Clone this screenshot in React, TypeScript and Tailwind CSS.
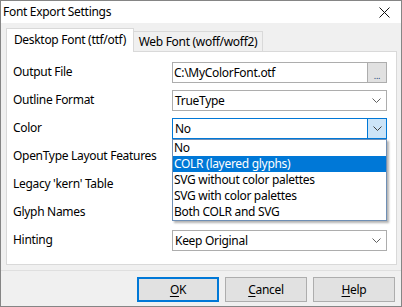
import React from "react";

const Chevron = ({ color = "#606060" }: { color?: string }) => (
  <svg width="9" height="5" viewBox="0 0 9 5" className="block">
    <path d="M0.5 0.5 L4.5 4.5 L8.5 0.5" fill="none" stroke={color} strokeWidth="1" />
  </svg>
);

const Select = ({ value, focused = false }: { value: string; focused?: boolean }) => (
  <div
    className={
      focused
        ? "flex h-[21px] w-[215px] items-stretch border border-[#0078d7] bg-white"
        : "flex h-[21px] w-[215px] items-stretch border border-[#adadad] bg-white"
    }
  >
    <div className="flex flex-1 items-center pl-[2px] leading-none">{value}</div>
    {focused ? (
      <div className="flex w-[19px] items-center justify-center border-l border-[#0078d7] bg-[#cce4f7]">
        <Chevron color="#404040" />
      </div>
    ) : (
      <div className="flex w-[19px] items-center justify-center">
        <Chevron />
      </div>
    )}
  </div>
);

const Row = ({ label, children }: { label: string; children?: React.ReactNode }) => (
  <div className="flex h-[21px] items-center">
    <div className="w-[159px] pb-[2px] leading-none">{label}</div>
    <div className="relative">{children}</div>
  </div>
);

const Btn = ({ u, rest, def = false }: { u: string; rest: string; def?: boolean }) => (
  <div
    className={
      def
        ? "flex h-[25px] w-[82px] items-center justify-center border-2 border-[#0078d7] bg-[#e1e1e1]"
        : "flex h-[25px] w-[82px] items-center justify-center border border-[#adadad] bg-[#e1e1e1]"
    }
  >
    <span>
      <span className="underline underline-offset-2">{u}</span>
      {rest}
    </span>
  </div>
);

export default function App() {
  const items = ["No", "COLR (layered glyphs)", "SVG without color palettes", "SVG with color palettes", "Both COLR and SVG"];
  return (
    <div
      className="flex h-[307px] w-[402px] flex-col border border-[#858585] bg-[#f0f0f0] text-[12px] tracking-[-0.3px] text-black"
      style={{ fontFamily: '"Noto Sans", "Segoe UI", sans-serif' }}
    >
      <div className="flex h-[22px] items-center justify-between bg-white pl-[2px] pr-[11px]">
        <span className="leading-none">Font Export Settings</span>
        <svg width="11" height="11" viewBox="0 0 11 11">
          <path d="M0.5 0.5 L10.5 10.5 M10.5 0.5 L0.5 10.5" stroke="#111" strokeWidth="1" />
        </svg>
      </div>
      <div className="flex flex-1 flex-col pt-[5px]">
        <div className="flex h-[24px] items-end pl-[5px]">
          <div className="relative z-10 flex h-[24px] w-[128px] items-center justify-center border-l border-r border-t border-[#d9d9d9] bg-white pb-[1px] leading-none">
            Desktop Font (ttf/otf)
          </div>
          <div className="mb-px flex h-[20px] w-[129px] items-center justify-center border-r border-t border-[#d9d9d9] bg-[#f0f0f0] pt-[1px] leading-none">
            Web Font (woff/woff2)
          </div>
        </div>
        <div className="-mt-px ml-[5px] flex h-[214px] w-[391px] flex-col gap-[7px] border border-[#d9d9d9] bg-white pl-[6px] pt-[10px]">
          <Row label="Output File">
            <div className="flex h-[21px] w-[215px] items-stretch border border-[#adadad] bg-white">
              <div className="flex flex-1 items-center pl-[1px] leading-none">C:\MyColorFont.otf</div>
              <div className="flex w-[19px] items-center justify-center border-l border-[#adadad] bg-[#e1e1e1] pt-[5px] text-[9px] leading-none text-[#1d3f7a]">
                ...
              </div>
            </div>
          </Row>
          <Row label="Outline Format">
            <Select value="TrueType" />
          </Row>
          <Row label="Color">
            <Select value="No" focused />
            <div className="absolute left-0 top-full z-20 flex h-[82px] w-[215px] flex-col border border-[#6f8fb5] bg-white shadow-[2px_2px_2px_rgba(0,0,0,0.3)]">
              {items.map((it, i) => (
                <div
                  key={it}
                  className={
                    i === 1
                      ? "flex h-[16px] items-center bg-[#0078d7] pl-[1px] leading-none text-white"
                      : "flex h-[16px] items-center pl-[1px] leading-none"
                  }
                >
                  {it}
                </div>
              ))}
            </div>
          </Row>
          <Row label="OpenType Layout Features" />
          <Row label="Legacy 'kern' Table" />
          <Row label="Glyph Names" />
          <Row label="Hinting">
            <Select value="Keep Original" />
          </Row>
        </div>
        <div className="mt-[5px] h-px bg-[#dfdfdf]" />
        <div className="mt-[6px] flex gap-[6px] pl-[136px]">
          <Btn u="O" rest="K" def />
          <Btn u="C" rest="ancel" />
          <Btn u="H" rest="elp" />
        </div>
      </div>
    </div>
  );
}
